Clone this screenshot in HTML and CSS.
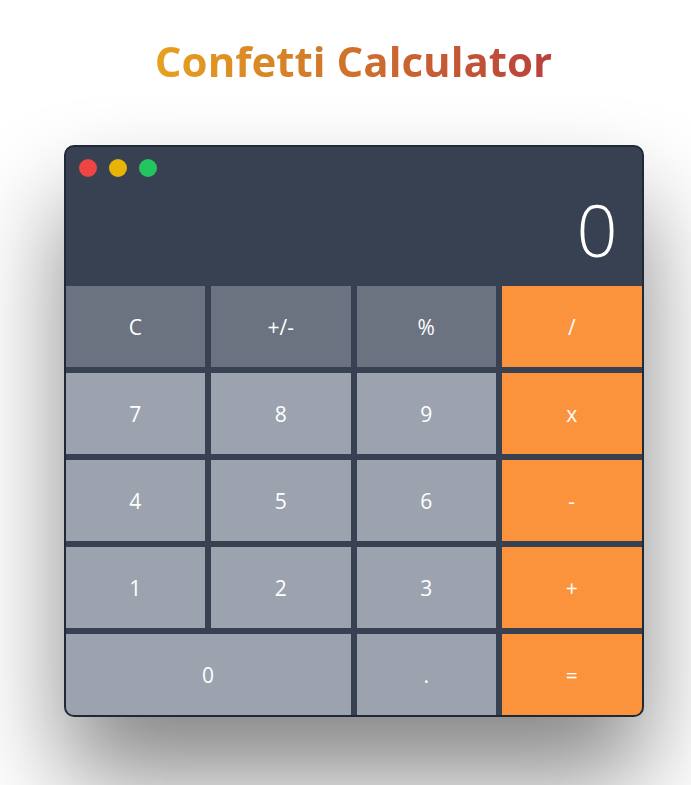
FILE: index.html
```html
<!DOCTYPE html>
<html lang="en">
<head>
<meta charset="utf-8">
<title>Confetti Calculator</title>
<link rel="stylesheet" href="styles.css">
</head>
<body>
<main class="page">
  <h1 class="title">Confetti Calculator</h1>
  <div class="calc">
    <div class="screen">
      <div class="dots">
        <span class="dot dot-red"></span>
        <span class="dot dot-yellow"></span>
        <span class="dot dot-green"></span>
      </div>
      <div class="display">0</div>
    </div>
    <div class="keys">
      <button class="key key-fn">C</button>
      <button class="key key-fn">+/-</button>
      <button class="key key-fn">%</button>
      <button class="key key-op">/</button>
      <button class="key">7</button>
      <button class="key">8</button>
      <button class="key">9</button>
      <button class="key key-op">x</button>
      <button class="key">4</button>
      <button class="key">5</button>
      <button class="key">6</button>
      <button class="key key-op">-</button>
      <button class="key">1</button>
      <button class="key">2</button>
      <button class="key">3</button>
      <button class="key key-op">+</button>
      <button class="key key-wide">0</button>
      <button class="key">.</button>
      <button class="key key-op">=</button>
    </div>
  </div>
</main>
</body>
</html>
```

FILE: styles.css
```css
html, body {
  margin: 0;
  padding: 0;
}

body {
  background: #ffffff;
  font-family: "Open Sans", "Noto Sans", sans-serif;
  min-height: 785px;
  overflow: hidden;
}

.page {
  display: flex;
  flex-direction: column;
  align-items: center;
  padding: 36px 0 0 16px;
}

.title {
  margin: 0 0 59px;
  font-size: 42px;
  line-height: 50px;
  font-weight: 700;
  background: linear-gradient(to right, #e6a21e, #b8403b);
  -webkit-background-clip: text;
  background-clip: text;
  color: transparent;
}

.calc {
  width: 576px;
  border: 2px solid #1f2937;
  border-radius: 10px;
  background: #374151;
  overflow: hidden;
  box-shadow: 0 60px 100px rgba(0, 0, 0, 0.48);
}

.screen {
  padding: 12px 24px 21px 13px;
}

.dots {
  display: flex;
  gap: 12px;
  height: 18px;
}

.dot {
  width: 18px;
  height: 18px;
  border-radius: 50%;
}

.dot-red { background: #ef4444; }
.dot-yellow { background: #eab308; }
.dot-green { background: #22c55e; }

.display {
  margin-top: 16px;
  text-align: right;
  color: #ffffff;
  font-size: 72px;
  line-height: 72px;
  font-weight: 300;
}

.keys {
  display: grid;
  grid-template-columns: repeat(4, 1fr);
  grid-auto-rows: 81px;
  gap: 6px;
  background: #374151;
}

.key {
  border: none;
  margin: 0;
  padding: 0;
  background: #9ca3af;
  color: #ffffff;
  font-family: "Open Sans", "Noto Sans", sans-serif;
  font-size: 21px;
  font-weight: 400;
  display: flex;
  align-items: center;
  justify-content: center;
}

.key-fn { background: #6b7280; }
.key-op { background: #fb923c; }
.key-wide { grid-column: span 2; }
```
